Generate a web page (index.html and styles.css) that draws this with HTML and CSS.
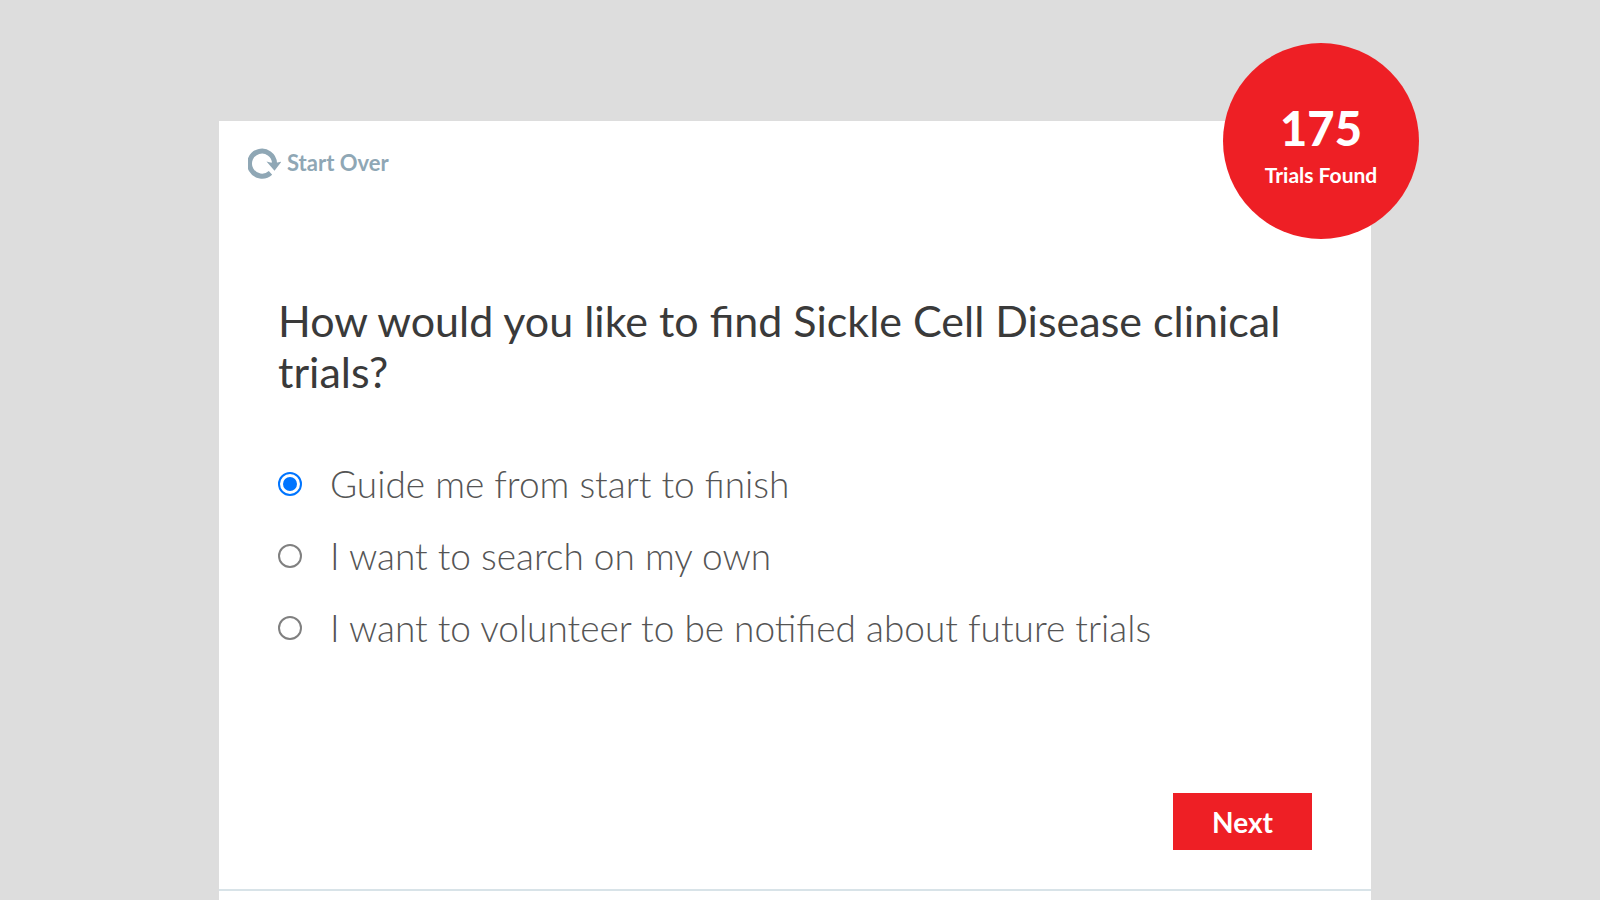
FILE: index.html
```
<!doctype html>
<html lang="en">
<head>
<meta charset="UTF-8">
<meta name="viewport" content="width=device-width, initial-scale=1">
<title>Find Clinical Trials</title>
<link rel="stylesheet" href="styles.css">
</head>

<body>
<main class="card">
    <div class="count">
        <strong>175</strong>
        <span>Trials Found</span>
    </div>

    <a class="start-over" href="#">
        <svg width="33" height="32" viewBox="0 0 33 32" aria-hidden="true">
            <path d="M22.500 25.800 A12.500 12.500 0 1 1 26.500 16" fill="none" stroke="#8fa7b5" stroke-width="5"/>
            <path d="M18.500 14.500 Q26 17 33.500 14.500 L26.500 23.800 Z" fill="#8fa7b5"/>
        </svg>
        Start Over
    </a>

    <form class="question">
        <fieldset>
            <legend>How would you like to find Sickle Cell Disease clinical trials?</legend>
            <label><input type="radio" name="path" value="guide" checked>Guide me from start to finish</label>
            <label><input type="radio" name="path" value="search">I want to search on my own</label>
            <label><input type="radio" name="path" value="volunteer">I want to volunteer to be notified about future trials</label>
        </fieldset>
        <button type="submit">Next</button>
    </form>
</main>
</body>
</html>
```
FILE: styles.css
```
*{box-sizing:border-box;}
body{margin:0;padding:121px 10px 0 0;background:#ddd;color:#3a3a3a;font-family:Lato,"Liberation Sans",sans-serif;}

.card{position:relative;width:72vw;min-height:calc(100vh - 121px);margin:0 auto;padding-top:25px;background:#fff;}

/* red badge over the corner */
.count{position:absolute;top:-78px;right:-48px;display:flex;flex-direction:column;align-items:center;justify-content:center;width:196px;height:196px;padding-top:12px;border-radius:50%;background:#ee1f25;color:#fff;font-weight:700;}
.count strong{font-size:47px;line-height:56px;}
.count span{font-size:21px;line-height:38px;}

.start-over{display:inline-flex;align-items:center;gap:6px;margin-left:29px;color:#8fa7b5;font-size:22px;font-weight:700;line-height:34px;text-decoration:none;}

.question{display:flex;flex-direction:column;padding:113px 59px 39px;border-bottom:2px solid #d8e3e8;}
.question fieldset{margin:0 0 129px;padding:0;border:0;}
.question legend{margin-bottom:51px;padding:0;font-size:43px;line-height:51px;}
.question label{display:flex;align-items:center;color:#555;font-size:37px;font-weight:300;line-height:72px;}
.question input{appearance:none;display:grid;place-items:center;flex:none;width:24px;height:24px;margin:0 28px 0 0;border:2px solid #808080;border-radius:50%;background:#fff;}
.question input:checked{border-color:#0075ff;}
.question input:checked::before{content:"";width:14px;height:14px;border-radius:50%;background:#0075ff;}
.question button{align-self:flex-end;width:139px;height:57px;border:0;background:#ee1f25;color:#fff;font:700 28px/36px Lato,"Liberation Sans",sans-serif;cursor:pointer;}
```
